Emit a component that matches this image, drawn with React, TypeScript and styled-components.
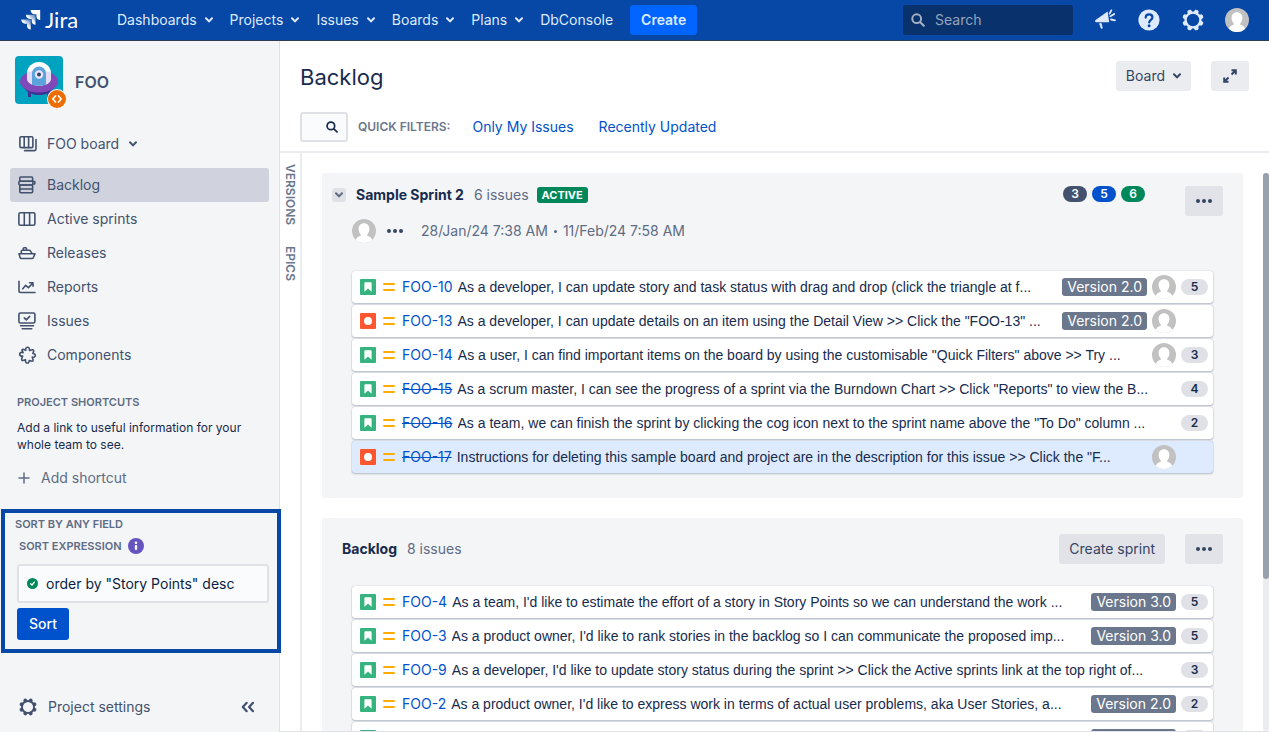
import React from 'react';
import styled, { createGlobalStyle, css } from 'styled-components';

const color = {
  ink: '#172b4d',
  slate: '#42526e',
  muted: '#5e6c84',
  link: '#0052cc',
  header: '#0747a6',
  panel: '#f4f5f7',
  line: '#ebecf0',
  green: '#00875a',
};

const GlobalStyle = createGlobalStyle`
  *, *::before, *::after { box-sizing: border-box; }
  html, body { margin: 0; height: 100%; }
  body {
    font-family: Inter, "Liberation Sans", sans-serif;
    font-size: 14px;
    line-height: 20px;
    color: ${color.ink};
    background: #fff;
    overflow: hidden;
  }
  button, input { font: inherit; color: inherit; margin: 0; }
  button { border: 0; background: none; padding: 0; cursor: pointer; }
  a { color: inherit; text-decoration: none; }
  h1, h2, h3, p, ul { margin: 0; padding: 0; }
  ul { list-style: none; }
  svg { display: block; flex: none; }
`;

/* ---------- icons ---------- */

const Chevron = () => (
  <svg width="8" height="6" viewBox="0 0 8 6" fill="none" stroke="currentColor" strokeWidth="2" strokeLinecap="round" strokeLinejoin="round">
    <path d="M1 1.2 4 4.4 7 1.2" />
  </svg>
);

const JiraMark = () => (
  <svg width="20" height="20" viewBox="0 0 20 20">
    <defs>
      <linearGradient id="fadeA" x1="1" y1="0" x2="0.2" y2="0.9">
        <stop offset="0.1" stopColor="#fff" stopOpacity="0.35" />
        <stop offset="0.6" stopColor="#fff" />
      </linearGradient>
    </defs>
    <path d="M9.6 0H19.2V9.9C17 9.9 15.4 8.3 15.4 6.2V4.2H13.4C11.3 4.2 9.6 2.4 9.6 0Z" fill="#fff" />
    <path d="M4.9 4.8H14.5V14.7C12.3 14.7 10.7 13 10.7 10.9V9H8.7C6.6 9 4.9 7.1 4.9 4.8Z" fill="url(#fadeA)" />
    <path d="M0.2 9.6H9.8V19.4C7.6 19.4 6 17.8 6 15.7V13.7H4C1.9 13.7 0.2 11.9 0.2 9.6Z" fill="url(#fadeA)" />
  </svg>
);

const SearchIcon = ({ size = 14 }: { size?: number }) => (
  <svg width={size} height={size} viewBox="0 0 14 14" fill="none" stroke="currentColor" strokeWidth="2" strokeLinecap="round">
    <circle cx="5.7" cy="5.7" r="4.4" />
    <path d="m9.2 9.2 3.6 3.6" />
  </svg>
);

const MegaphoneIcon = () => (
  <svg width="22" height="22" viewBox="0 0 22 22">
    <path d="M1.2 11.2 13.6 2.4 15.2 13.2 1.9 13.3Q0.4 12.4 1.2 11.2Z" fill="currentColor" />
    <path d="M5.6 14.6h1.7l1 4.600H7.200z" fill="currentColor" stroke="currentColor" strokeWidth="0.8" strokeLinejoin="round" />
    <path d="M15.6 4.6 17.3 1.400M16.5 7.300l3.700-2.300M17 10.500l4 .9" stroke="currentColor" strokeWidth="1.8" strokeLinecap="round" />
  </svg>
);

const HelpIcon = () => (
  <svg width="22" height="22" viewBox="0 0 22 22">
    <circle cx="11" cy="11" r="10.6" fill="currentColor" />
    <path d="M7.700 8.600C7.700 6.600 9.200 5.300 11.100 5.300s3.300 1.200 3.300 3.100c0 2.400-3.200 2.600-3.200 5" fill="none" stroke={color.header} strokeWidth="2.200" strokeLinecap="round" />
    <circle cx="11.1" cy="16.7" r="1.5" fill={color.header} />
  </svg>
);

const GearIcon = ({ size }: { size: number }) => (
  <svg width={size} height={size} viewBox="0 0 22 22">
    <g fill="currentColor">
      {[22.5, 67.5, 112.5, 157.5, 202.5, 247.5, 292.5, 337.5].map((a) => (
        <path key={a} d="M8.400 4.500 9 .8Q11-.6 13 .8L13.600 4.500Z" transform={`rotate(${a} 11 11)`} />
      ))}
    </g>
    <circle cx="11" cy="11" r="7.4" fill="none" stroke="currentColor" strokeWidth="2.3" />
  </svg>
);

const Person = () => (
  <svg width="24" height="24" viewBox="0 0 24 24">
    <defs>
      <clipPath id="round">
        <circle cx="12" cy="12" r="12" />
      </clipPath>
    </defs>
    <g clipPath="url(#round)">
      <rect width="24" height="24" fill="#c1c1c1" />
      <path d="M12 4.3c3.3 0 5.4 2.3 5.4 5.6 0 2.6-1 4.3-2.2 5.5v1.4c2.6.7 5.3 2.2 5.9 7.2H2.9c.6-5 3.3-6.500 5.9-7.200v-1.400C7.600 14.200 6.600 12.500 6.600 9.900c0-3.300 2.100-5.600 5.400-5.600Z" fill="#fff" />
    </g>
  </svg>
);

const ProjectPicture = () => (
  <svg width="48" height="48" viewBox="0 0 48 48">
    <rect width="48" height="48" rx="4" fill="#00a3bf" />
    <path d="M13 35h3v6h-3zM32 35h3v6h-3z" fill="#403294" />
    <ellipse cx="24" cy="28.500" rx="15.500" ry="10.500" fill="#403294" />
    <ellipse cx="24" cy="25.500" rx="19" ry="11" fill="#8048b8" />
    <path d="M12 17.500a12 11.500 0 0 1 24 0V22c0 5-5 7.500-12 7.500S12 27 12 22Z" fill="#fff" />
    <path d="M12 15.500h24V22c0 5-5 7.500-12 7.500S12 27 12 22Z" fill="#e3dcf5" />
    <path d="M17 17.500a7 7 0 0 1 14 0V29q-7 1.500-14 0Z" fill="#5ba3dc" />
    <circle cx="24" cy="18.500" r="4.200" fill="#eae6ff" />
    <circle cx="24" cy="18.500" r="2" fill="#344563" />
  </svg>
);

const CodeBadge = () => (
  <svg width="20" height="20" viewBox="0 0 20 20">
    <circle cx="10" cy="10" r="10" fill={color.panel} />
    <circle cx="10" cy="10" r="9" fill="#ef6c00" />
    <path d="M8.500 7 5.800 10l2.700 3M11.500 7l2.700 3-2.700 3" fill="none" stroke="#fff" strokeWidth="1.700" strokeLinecap="round" strokeLinejoin="round" />
  </svg>
);

const Stroke = ({ children }: { children: React.ReactNode }) => (
  <svg width="18" height="18" viewBox="0 0 18 18" fill="none" stroke="currentColor" strokeWidth="1.600" strokeLinecap="round" strokeLinejoin="round">
    {children}
  </svg>
);

const BoardsIcon = () => (
  <Stroke>
    <rect x="0.900" y="1.800" width="13" height="10.800" rx="1.200" />
    <path d="M5.200 2v10.400M9.600 2v10.400M5.500 15.600h10q1.500 0 1.500-1.500V4.500" />
  </Stroke>
);
const BacklogIcon = () => (
  <Stroke>
    <rect x="1.800" y="1" width="12.800" height="4.200" rx="1" />
    <rect x="0.900" y="5.200" width="14" height="3.800" rx="1" />
    <rect x="1.800" y="9" width="12.800" height="4" rx="1" />
    <path d="M14.600 5.200h1.300q1 0 1 1v.8q0 1-1 1.200M1.800 13v2.800q0 1 1 1h10.800q1 0 1-1V13" />
  </Stroke>
);
const ColumnsIcon = () => (
  <Stroke>
    <rect x="0.900" y="2.800" width="16" height="12.400" rx="1.500" />
    <path d="M6.300 3v12M11.600 3v12" />
  </Stroke>
);
const ShipIcon = () => (
  <Stroke>
    <path d="M1 9.800h16l-1.600 3.700q-.4 1-1.400 1H3.300q-1 0-1.200-1ZM3.300 9.600V7.300q0-1 1-1h6.900q1 0 1.500 1l1.300 2.300M5.300 6.200V4.600q0-.8.8-.8h1.600q.8 0 .8.800v1.600" />
  </Stroke>
);
const ChartIcon = () => (
  <Stroke>
    <path d="M1 3.300v9.500q0 1.700 1.700 1.700H17M4.800 10.800 7.700 7.300l2.700 2.300L15 5M11.600 4.800H15v3.500" />
  </Stroke>
);
const ScreenIcon = () => (
  <Stroke>
    <rect x="0.900" y="1" width="16" height="10" rx="1.500" />
    <path d="m6.300 5.900 2 2 3.400-3.500M2.500 13.800h13M4.200 16.700h9.600" />
  </Stroke>
);
const PuzzleIcon = () => (
  <Stroke>
    <path d="M7.800 4.300C6.700.6 11.900.2 11.400 3.700l.2.800 2.800-.7q1.300-.1 1.300 1.200l-.8 2.500c3.100-.2 3.200 4.100.2 3.700l-.9-.1.900 3q0 1.100-1.100 1.200l-2.800-.8c.3 3.500-4 3.200-3.700.2l.1-.9-2.900.8q-1.200-.1-1.100-1.300l1-3.200c-3.700.7-3.900-4.100-.5-3.700l1 .2-1.100-2.400q-.1-1 1-1Z" />
  </Stroke>
);

const PlusIcon = () => (
  <svg width="12" height="12" viewBox="0 0 12 12" stroke="currentColor" strokeWidth="1.500" strokeLinecap="round">
    <path d="M6 1v10M1 6h10" />
  </svg>
);
const InfoIcon = () => (
  <svg width="16" height="16" viewBox="0 0 16 16">
    <circle cx="8" cy="8" r="8" fill="#6554c0" />
    <circle cx="8" cy="4.700" r="1.300" fill="#fff" />
    <rect x="6.800" y="7" width="2.400" height="5" rx="1" fill="#fff" />
  </svg>
);
const ValidIcon = () => (
  <svg width="11" height="11" viewBox="0 0 11 11">
    <circle cx="5.500" cy="5.500" r="5.500" fill={color.green} />
    <path d="m3.600 5.700 1.400 1.300 2.400-2.900" fill="none" stroke="#fff" strokeWidth="1.300" strokeLinecap="round" strokeLinejoin="round" />
  </svg>
);
const CollapseIcon = () => (
  <svg width="14" height="12" viewBox="0 0 14 12" fill="none" stroke="currentColor" strokeWidth="2.200" strokeLinecap="round" strokeLinejoin="round">
    <path d="M5.700 1.800 1.800 6l3.900 4.200M12 1.800 8.100 6l3.900 4.200" />
  </svg>
);
const ExpandIcon = () => (
  <svg width="14" height="14" viewBox="0 0 14 14" fill="none" stroke="currentColor" strokeWidth="2">
    <path d="M8.500 5.500 12.500 1.500M8.500 1.200h4.300v4.300M5.500 8.500l-4 4M1.200 8.500v4.300h4.300" />
  </svg>
);
const DotsIcon = () => (
  <svg width="16" height="4" viewBox="0 0 16 4" fill="currentColor">
    <circle cx="2" cy="2" r="2" />
    <circle cx="8" cy="2" r="2" />
    <circle cx="14" cy="2" r="2" />
  </svg>
);
const StoryIcon = () => (
  <svg width="16" height="16" viewBox="0 0 16 16">
    <rect width="16" height="16" rx="1" fill="#36b37e" />
    <path d="M4.400 4q0-.8.8-.8h5.600q.8 0 .8.800v8.800L8 9.400l-3.600 3.400Z" fill="#fff" />
  </svg>
);
const BugIcon = () => (
  <svg width="16" height="16" viewBox="0 0 16 16">
    <rect width="16" height="16" rx="1" fill="#ff5630" />
    <circle cx="8" cy="8" r="4" fill="#fff" />
  </svg>
);
const MediumIcon = () => (
  <svg width="12" height="10" viewBox="0 0 12 10" stroke="#ffab00" strokeWidth="2" strokeLinecap="round">
    <path d="M1 2h10M1 8h10" />
  </svg>
);

/* ---------- top bar ---------- */

const Page = styled.div`
  display: flex;
  flex-direction: column;
  height: 100vh;
`;

const TopBar = styled.header`
  display: flex;
  align-items: center;
  height: 41px;
  padding: 0 20px 0 21px;
  flex: none;
  color: #deebff;
  background: ${color.header};
  border-bottom: 1px solid #2e3d54;
`;

const Logo = styled.a`
  display: flex;
  align-items: center;
  gap: 4px;
  width: 96px;
  font-family: Lato, Inter, sans-serif;
  font-size: 22px;
  color: #fff;
`;

const Menu = styled.nav`
  display: flex;
  align-items: center;
  gap: 17px;
`;

const MenuButton = styled.button`
  display: flex;
  align-items: center;
  gap: 8px;
  height: 30px;
`;

const CreateButton = styled.button`
  height: 30px;
  padding: 0 11px;
  border-radius: 3px;
  background: #0065ff;
  font-weight: 600;
`;

const SearchField = styled.label`
  display: flex;
  align-items: center;
  gap: 10px;
  width: 170px;
  height: 30px;
  margin-left: auto;
  padding: 0 8px;
  border-radius: 3px;
  background: #09326c;
  color: #a5b0c2;

  input {
    width: 100%;
    min-width: 0;
    padding: 0;
    border: 0;
    outline: 0;
    background: none;
  }
  input::placeholder { color: #94a3bb; opacity: 1; }
`;

const Tools = styled.div`
  display: flex;
  align-items: center;
  gap: 20px;
  margin-left: 20px;
`;

const ToolButton = styled.button`
  display: flex;
  align-items: center;
  justify-content: center;
  width: 24px;
  height: 24px;
`;

/* ---------- sidebar ---------- */

const Body = styled.div`
  display: grid;
  grid-template-columns: 280px minmax(0, 1fr);
  flex: 1;
  min-height: 0;
`;

const Sidebar = styled.aside`
  display: flex;
  flex-direction: column;
  min-height: 0;
  padding-top: 15px;
  background: ${color.panel};
  border-right: 1px solid #dfe1e6;
  color: ${color.slate};
`;

const Project = styled.a`
  display: flex;
  align-items: center;
  gap: 12px;
  padding-left: 15px;
  font-size: 16px;
  line-height: 24px;
  font-weight: 600;
`;

const ProjectName = styled.span`
  padding-top: 4px;
`;

const ProjectAvatar = styled.span`
  position: relative;
`;

const AvatarBadge = styled.span`
  position: absolute;
  right: -4px;
  bottom: -5px;
`;

const BoardSwitch = styled.button`
  display: flex;
  align-items: center;
  gap: 10px;
  height: 34px;
  margin: 23px 10px 7px;
  padding: 0 9px;
`;

const NavLink = styled.a<{ $active?: boolean }>`
  display: flex;
  align-items: center;
  gap: 11px;
  height: 34px;
  margin: 0 10px;
  padding: 0 8px;
  border-radius: 3px;
  ${(p) => p.$active && css`background: #d0d3dd;`}
`;

const capsLabel = css`
  font-size: 11px;
  line-height: 16px;
  font-weight: 600;
  text-transform: uppercase;
  color: ${color.muted};
`;

const Label = styled.h3`
  ${capsLabel}
`;

const Shortcuts = styled.section`
  display: flex;
  flex-direction: column;
  gap: 9px;
  padding: 22px 17px 0;
`;

const Hint = styled.p`
  font-size: 12px;
  line-height: 17px;
  color: ${color.ink};
`;

const AddShortcut = styled.button`
  display: flex;
  align-items: center;
  gap: 11px;
  height: 32px;
  padding-left: 1px;
  color: ${color.muted};
`;

const SortBox = styled.form`
  display: flex;
  flex-direction: column;
  margin: 15px -2px 0 1px;
  padding: 3px 8px 9px 12px;
  border: 4px solid ${color.header};
`;

const SortHeading = styled(Label)`
  margin-left: -2px;
`;

const SortLabel = styled.label`
  ${capsLabel}
  display: flex;
  align-items: center;
  gap: 6px;
  margin: 6px 0 10px 2px;
`;

const Expression = styled.div`
  display: flex;
  align-items: center;
  gap: 8px;
  height: 39px;
  padding: 0 8px;
  border: 2px solid #dfe1e6;
  border-radius: 3px;
  background: #fafbfc;

  input {
    flex: 1;
    min-width: 0;
    padding: 0;
    border: 0;
    outline: 0;
    background: none;
    color: #091e42;
  }
`;

const SortButton = styled.button`
  align-self: flex-start;
  height: 32px;
  margin-top: 5px;
  padding: 0 12px;
  border-radius: 3px;
  background: ${color.link};
  color: #fff;
  font-weight: 500;
`;

const SidebarFooter = styled.footer`
  display: flex;
  align-items: center;
  justify-content: space-between;
  margin-top: auto;
  padding: 0 24px 15px 19px;
`;

const FooterLink = styled.a`
  display: flex;
  align-items: center;
  gap: 11px;
`;

/* ---------- main ---------- */

const Main = styled.main`
  display: flex;
  flex-direction: column;
  min-width: 0;
  min-height: 0;
  border-bottom: 1px solid #dfe1e6;
`;

const TitleBar = styled.div`
  display: flex;
  align-items: flex-start;
  gap: 20px;
  padding: 20px 20px 0;
`;

const Title = styled.h1`
  flex: 1;
  font-size: 22px;
  line-height: 32px;
  font-weight: 400;
`;

const GreyButton = styled.button<{ $soft?: boolean; $icon?: boolean }>`
  display: inline-flex;
  align-items: center;
  justify-content: center;
  gap: 8px;
  flex: none;
  width: ${(p) => (p.$icon ? '38px' : 'auto')};
  height: 30px;
  padding: ${(p) => (p.$icon ? '0' : '0 10px')};
  border-radius: 3px;
  background: ${(p) => (p.$soft ? color.line : '#e1e3e9')};
  color: #344563;
`;

const Filters = styled.div`
  display: flex;
  align-items: center;
  padding: 19px 20px 9px;
  border-bottom: 2px solid ${color.line};

  a { margin-left: 22px; color: ${color.link}; }
  a + a { margin-left: 25px; }
`;

const FilterSearch = styled.button`
  display: flex;
  align-items: center;
  justify-content: flex-end;
  width: 48px;
  height: 30px;
  margin-right: 10px;
  padding: 0 8px;
  border: 2px solid #dfe1e6;
  border-radius: 3px;
  background: #fafbfc;
`;

const FilterLabel = styled.span`
  font-size: 12px;
  font-weight: 600;
  color: #6b778c;
`;

const Workspace = styled.div`
  display: flex;
  flex: 1;
  min-height: 0;
`;

const SideTabs = styled.div`
  display: flex;
  flex-direction: column;
  align-items: center;
  gap: 21px;
  width: 22px;
  padding-top: 11px;
  border-right: 2px solid ${color.line};
`;

const SideTab = styled.button`
  writing-mode: vertical-rl;
  font-size: 12px;
  line-height: 16px;
  font-weight: 600;
  text-transform: uppercase;
  color: #6b778c;
`;

const Scroller = styled.div`
  display: flex;
  flex-direction: column;
  flex: 1;
  gap: 20px;
  min-width: 0;
  padding: 20px 20px 0;
  overflow: hidden;
`;

const Track = styled.div`
  width: 6px;
  margin-top: 20px;
  border-radius: 3px;
  background: ${color.line};
`;

const Thumb = styled.div`
  height: 406px;
  border-radius: 3px;
  background: #97a0af;
`;

const Panel = styled.section<{ $top: string }>`
  flex: none;
  padding: ${(p) => p.$top} 20px 25px;
  border-radius: 3px;
  background: ${color.panel};
`;

const PanelHead = styled.div<{ $sprint?: boolean }>`
  display: flex;
  align-items: ${(p) => (p.$sprint ? 'flex-start' : 'center')};
  gap: 10px;
  margin-left: ${(p) => (p.$sprint ? '-10px' : '0')};
`;

const PanelTitle = styled.h2`
  font-size: 14px;
  line-height: 18px;
  font-weight: 700;
  color: ${color.ink};
`;

const Heading = styled.div`
  display: flex;
  align-items: center;
  flex: 1;
  gap: 10px;
  line-height: 18px;
  color: ${color.muted};
`;

const Toggle = styled.button`
  display: flex;
  align-items: center;
  justify-content: center;
  width: 14px;
  height: 14px;
  border-radius: 3px;
  background: #dfe1e6;
`;

const StatusTag = styled.span`
  margin-left: -2px;
  padding: 0 5px;
  border-radius: 3px;
  background: ${color.green};
  color: #fff;
  font-size: 11px;
  line-height: 16px;
  font-weight: 700;
`;

const Counts = styled.div`
  display: flex;
  gap: 5px;
  margin-right: 30px;
`;

const Pill = styled.span<{ $bg: string; $light?: boolean }>`
  min-width: ${(p) => (p.$light ? '27px' : '24px')};
  border-radius: 8px;
  background: ${(p) => p.$bg};
  color: ${(p) => (p.$light ? color.ink : '#fff')};
  font-size: 12px;
  line-height: 16px;
  font-weight: 600;
  text-align: center;
`;

const PanelActions = styled.div`
  display: flex;
  gap: 20px;
`;

const SprintMeta = styled.div`
  display: flex;
  align-items: center;
  gap: 11px;
  height: 24px;
  margin: 3px 10px 0;
  color: ${color.muted};
`;

const Dates = styled.span`
  display: flex;
  align-items: center;
  gap: 6px;
  margin-left: 7px;
`;

const Dot = styled.span`
  width: 3px;
  height: 3px;
  border-radius: 50%;
  background: currentColor;
`;

const MetaDots = styled.button`
  color: #344563;
`;

const IssueList = styled.ul<{ $top: string }>`
  display: flex;
  flex-direction: column;
  gap: 2px;
  margin: ${(p) => p.$top} 10px 0;
`;

const IssueRow = styled.li<{ $selected?: boolean }>`
  display: flex;
  align-items: center;
  height: 32px;
  padding: 0 5px 0 8px;
  border-radius: 3px;
  background: ${(p) => (p.$selected ? '#deebff' : '#fff')};
  box-shadow: 0 1px 2px rgba(9, 30, 66, 0.25), 0 0 1px rgba(9, 30, 66, 0.31);
`;

const Priority = styled.span`
  margin: 0 7px;
`;

const IssueKey = styled.a<{ $done?: boolean }>`
  margin-right: 5px;
  color: ${color.link};
  text-decoration: ${(p) => (p.$done ? 'line-through' : 'none')};
  white-space: nowrap;
`;

const Summary = styled.span`
  flex: 1;
  min-width: 0;
  overflow: hidden;
  font-family: "Liberation Sans", Arial, sans-serif;
  text-overflow: ellipsis;
  white-space: nowrap;
`;

const RowEnd = styled.span`
  display: flex;
  align-items: center;
  gap: 5px;
  margin-left: 2px;
`;

const Version = styled.span`
  padding: 0 5px;
  border-radius: 3px;
  background: #6b778c;
  color: #fff;
  line-height: 18px;
  white-space: nowrap;
`;

const NoPoints = styled.span`
  width: 27px;
`;

type Issue = {
  id: string;
  text: string;
  bug?: boolean;
  done?: boolean;
  selected?: boolean;
  version?: string;
  person?: boolean;
  points?: number;
};

const sprintIssues: Issue[] = [
  { id: 'FOO-10', text: 'As a developer, I can update story and task status with drag and drop (click the triangle at f...', version: 'Version 2.0', person: true, points: 5 },
  { id: 'FOO-13', text: 'As a developer, I can update details on an item using the Detail View >> Click the "FOO-13" ...', bug: true, version: 'Version 2.0', person: true },
  { id: 'FOO-14', text: 'As a user, I can find important items on the board by using the customisable "Quick Filters" above >> Try ...', person: true, points: 3 },
  { id: 'FOO-15', text: 'As a scrum master, I can see the progress of a sprint via the Burndown Chart >> Click "Reports" to view the B...', done: true, points: 4 },
  { id: 'FOO-16', text: 'As a team, we can finish the sprint by clicking the cog icon next to the sprint name above the "To Do" column ...', done: true, points: 2 },
  { id: 'FOO-17', text: 'Instructions for deleting this sample board and project are in the description for this issue >> Click the "F...', bug: true, done: true, selected: true, person: true },
];

const backlogIssues: Issue[] = [
  { id: 'FOO-4', text: "As a team, I'd like to estimate the effort of a story in Story Points so we can understand the work ...", version: 'Version 3.0', points: 5 },
  { id: 'FOO-3', text: "As a product owner, I'd like to rank stories in the backlog so I can communicate the proposed imp...", version: 'Version 3.0', points: 5 },
  { id: 'FOO-9', text: "As a developer, I'd like to update story status during the sprint >> Click the Active sprints link at the top right of...", points: 3 },
  { id: 'FOO-2', text: "As a product owner, I'd like to express work in terms of actual user problems, aka User Stories, a...", version: 'Version 2.0', points: 2 },
  { id: '', text: '', version: 'Version 2.0', points: 2 },
];

const Issues = ({ items, top }: { items: Issue[]; top: string }) => (
  <IssueList $top={top}>
    {items.map((it) => (
      <IssueRow key={it.id} $selected={it.selected}>
        {it.bug ? <BugIcon /> : <StoryIcon />}
        <Priority><MediumIcon /></Priority>
        {it.id && <IssueKey href="#" $done={it.done}>{it.id}</IssueKey>}
        <Summary>{it.text}</Summary>
        <RowEnd>
          {it.version && <Version>{it.version}</Version>}
          {it.person && <Person />}
          {it.points ? <Pill $bg="#dfe1e6" $light>{it.points}</Pill> : <NoPoints />}
        </RowEnd>
      </IssueRow>
    ))}
  </IssueList>
);

const menus = ['Dashboards', 'Projects', 'Issues', 'Boards', 'Plans'];

const navItems = [
  { name: 'Backlog', icon: <BacklogIcon />, active: true },
  { name: 'Active sprints', icon: <ColumnsIcon /> },
  { name: 'Releases', icon: <ShipIcon /> },
  { name: 'Reports', icon: <ChartIcon /> },
  { name: 'Issues', icon: <ScreenIcon /> },
  { name: 'Components', icon: <PuzzleIcon /> },
];

export default function App() {
  return (
    <Page>
      <GlobalStyle />
      <TopBar>
        <Logo href="#"><JiraMark />Jira</Logo>
        <Menu>
          {menus.map((m) => (
            <MenuButton key={m}>{m}<Chevron /></MenuButton>
          ))}
          <a href="#">DbConsole</a>
          <CreateButton>Create</CreateButton>
        </Menu>
        <SearchField>
          <SearchIcon />
          <input type="search" placeholder="Search" aria-label="Search" />
        </SearchField>
        <Tools>
          <ToolButton aria-label="Feedback"><MegaphoneIcon /></ToolButton>
          <ToolButton aria-label="Help"><HelpIcon /></ToolButton>
          <ToolButton aria-label="Administration"><GearIcon size={22} /></ToolButton>
          <ToolButton aria-label="Profile"><Person /></ToolButton>
        </Tools>
      </TopBar>
      <Body>
        <Sidebar>
          <Project href="#">
            <ProjectAvatar>
              <ProjectPicture />
              <AvatarBadge><CodeBadge /></AvatarBadge>
            </ProjectAvatar>
            <ProjectName>FOO</ProjectName>
          </Project>
          <BoardSwitch><BoardsIcon />FOO board<Chevron /></BoardSwitch>
          <nav>
            {navItems.map((n) => (
              <NavLink key={n.name} href="#" $active={n.active}>{n.icon}{n.name}</NavLink>
            ))}
          </nav>
          <Shortcuts>
            <Label>Project shortcuts</Label>
            <Hint>Add a link to useful information for your whole team to see.</Hint>
            <AddShortcut><PlusIcon />Add shortcut</AddShortcut>
          </Shortcuts>
          <SortBox onSubmit={(e) => e.preventDefault()}>
            <SortHeading>Sort by any field</SortHeading>
            <SortLabel htmlFor="expression">Sort expression<InfoIcon /></SortLabel>
            <Expression>
              <ValidIcon />
              <input id="expression" type="text" defaultValue={'order by "Story Points" desc'} />
            </Expression>
            <SortButton type="submit">Sort</SortButton>
          </SortBox>
          <SidebarFooter>
            <FooterLink href="#"><GearIcon size={18} />Project settings</FooterLink>
            <button aria-label="Collapse sidebar"><CollapseIcon /></button>
          </SidebarFooter>
        </Sidebar>
        <Main>
          <TitleBar>
            <Title>Backlog</Title>
            <GreyButton $soft>Board<Chevron /></GreyButton>
            <GreyButton $soft $icon aria-label="Full screen"><ExpandIcon /></GreyButton>
          </TitleBar>
          <Filters>
            <FilterSearch aria-label="Search issues"><SearchIcon size={12} /></FilterSearch>
            <FilterLabel>QUICK FILTERS:</FilterLabel>
            <a href="#">Only My Issues</a>
            <a href="#">Recently Updated</a>
          </Filters>
          <Workspace>
            <SideTabs>
              <SideTab>Versions</SideTab>
              <SideTab>Epics</SideTab>
            </SideTabs>
            <Scroller>
              <Panel $top="13px">
                <PanelHead $sprint>
                  <Heading>
                    <Toggle aria-label="Collapse sprint"><Chevron /></Toggle>
                    <PanelTitle>Sample Sprint 2</PanelTitle>
                    <span>6 issues</span>
                    <StatusTag>ACTIVE</StatusTag>
                  </Heading>
                  <Counts>
                    <Pill $bg={color.slate}>3</Pill>
                    <Pill $bg={color.link}>5</Pill>
                    <Pill $bg={color.green}>6</Pill>
                  </Counts>
                  <GreyButton $icon aria-label="Sprint actions"><DotsIcon /></GreyButton>
                </PanelHead>
                <SprintMeta>
                  <Person />
                  <MetaDots aria-label="More members"><DotsIcon /></MetaDots>
                  <Dates>
                    <time>28/Jan/24 7:38 AM</time>
                    <Dot />
                    <time>11/Feb/24 7:58 AM</time>
                  </Dates>
                </SprintMeta>
                <Issues items={sprintIssues} top="28px" />
              </Panel>
              <Panel $top="16px">
                <PanelHead>
                  <Heading>
                    <PanelTitle>Backlog</PanelTitle>
                    <span>8 issues</span>
                  </Heading>
                  <PanelActions>
                    <GreyButton>Create sprint</GreyButton>
                    <GreyButton $icon aria-label="Backlog actions"><DotsIcon /></GreyButton>
                  </PanelActions>
                </PanelHead>
                <Issues items={backlogIssues} top="22px" />
              </Panel>
            </Scroller>
            <Track><Thumb /></Track>
          </Workspace>
        </Main>
      </Body>
    </Page>
  );
}
